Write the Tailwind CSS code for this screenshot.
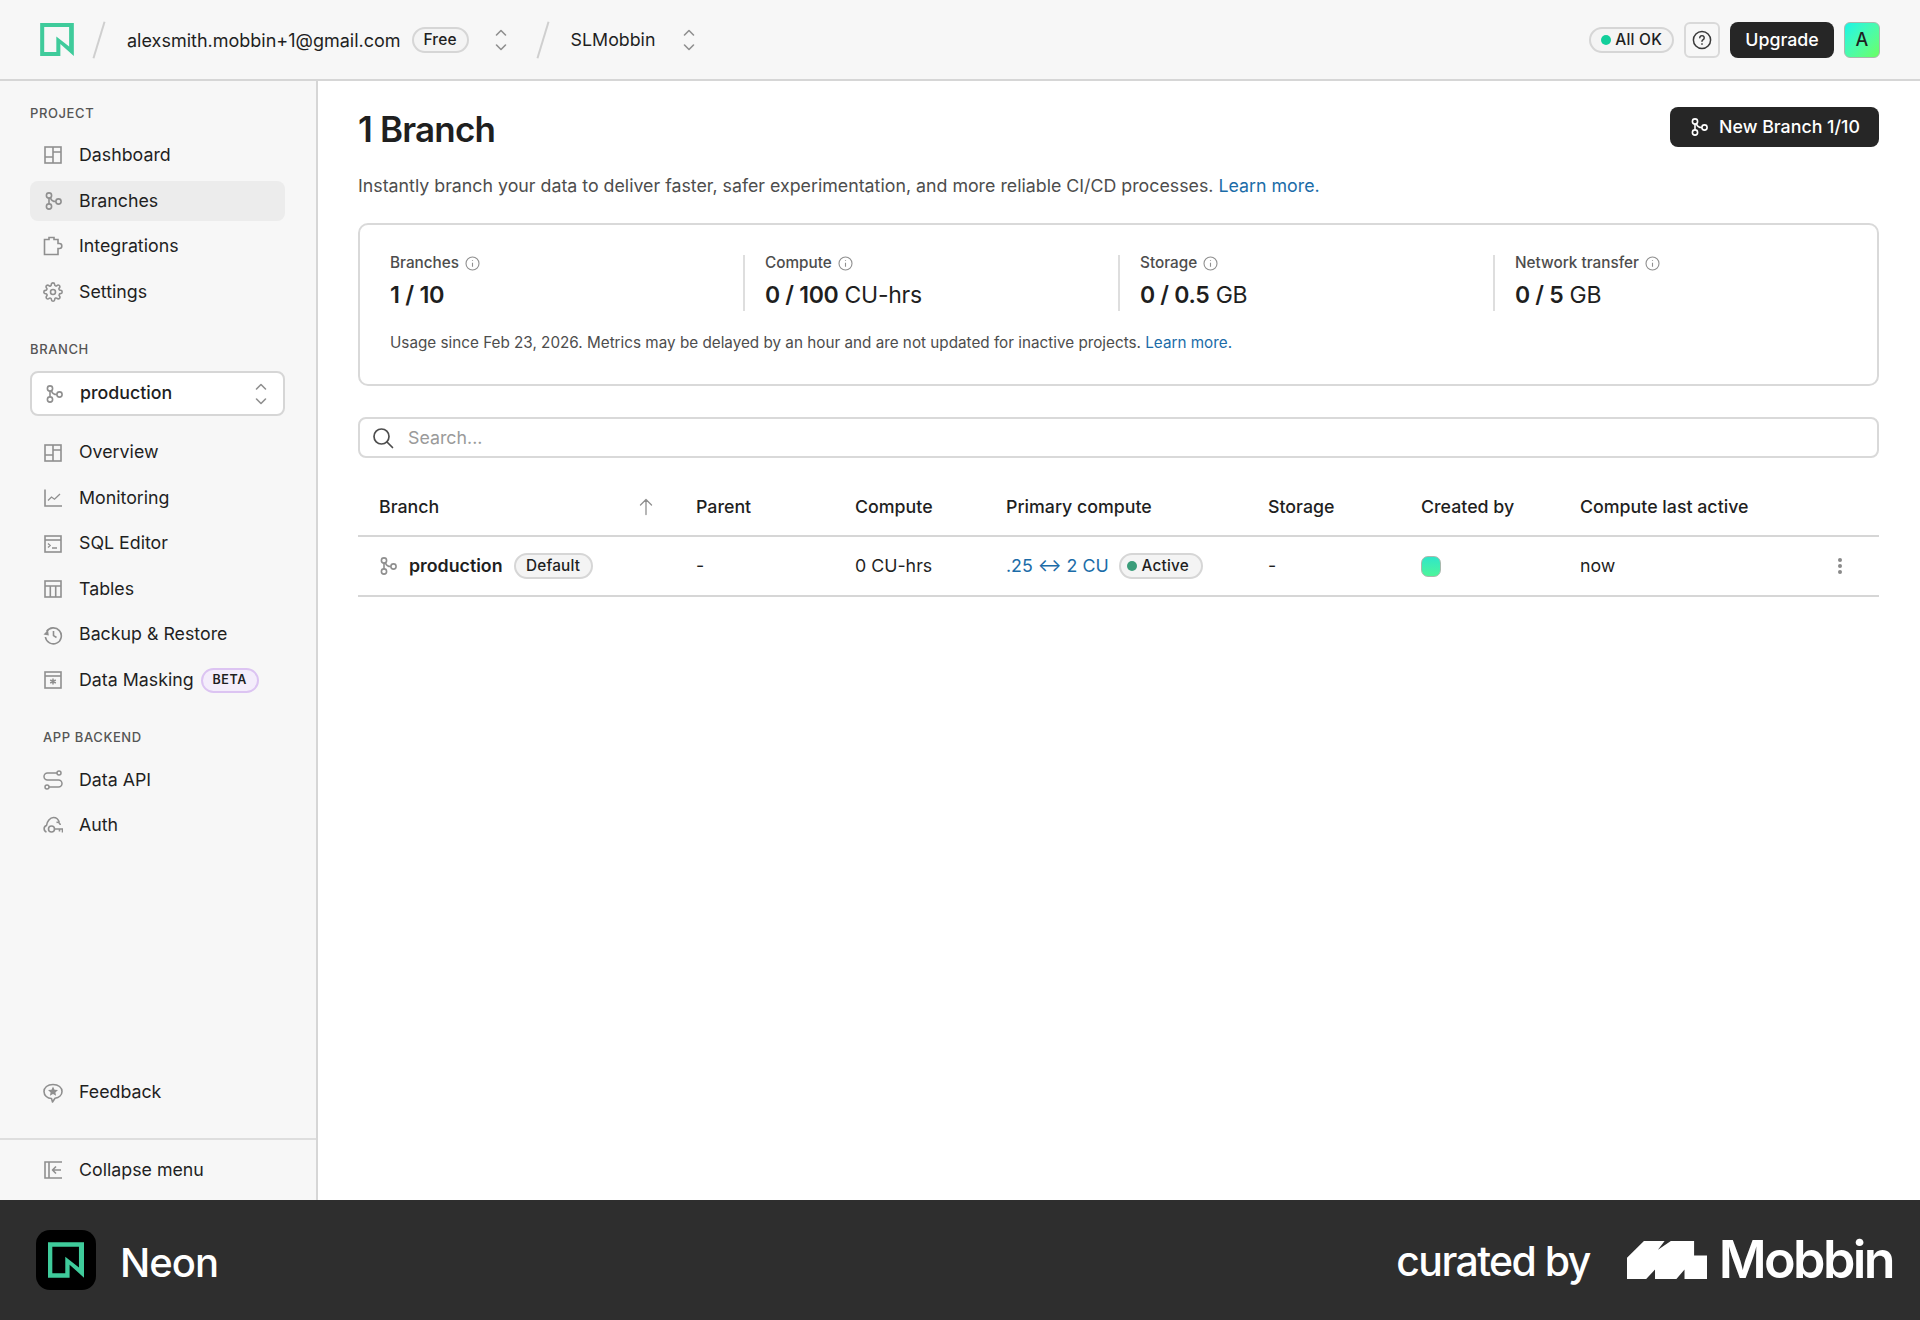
<!DOCTYPE html>
<html lang="en">
	<head>
		<meta charset="UTF-8" />
		<title>Branches</title>
		<script src="https://cdn.jsdelivr.net/npm/@tailwindcss/browser@4"></script>
	</head>
	<body class="font-['Inter',sans-serif] text-[#1f1f1f] bg-white">
		<div class="flex flex-col w-[1920px] h-[1320px] overflow-hidden">
			<!-- top bar -->
			<header class="flex items-center h-[81px] shrink-0 bg-[#f7f7f7] border-b-2 border-[#d6d6d6] pl-[40px] pr-[40px]">
				<svg class="w-[34px] h-[33px]" viewBox="0 0 100 98"><path fill="#3fcb9b" fill-rule="evenodd" d="M0 0H100V98L60 62V98H0ZM12 12V86H48V40L86 70V12Z" /></svg>
				<div class="ml-[24px] w-[2px] h-[38px] bg-[#cfcfcf] rotate-[17deg]"></div>
				<span class="ml-[27px] pt-[1px] text-[18px]">alexsmith.mobbin+1@gmail.com</span>
				<span class="ml-[11px] flex items-center justify-center w-[57px] h-[26px] rounded-full border-2 border-[#d6d6d6] bg-[#f4f4f4] text-[15.5px] font-medium tracking-[0.2px]">Free</span>
				<svg class="ml-[23px] w-[18px] h-[22px]" viewBox="0 0 18 22" fill="none" stroke="#8f8f8f" stroke-width="1.6" stroke-linecap="round" stroke-linejoin="round"><path d="M4.5 6 9 1.5 13.5 6M4.5 16 9 20.5 13.5 16" /></svg>
				<div class="ml-[32px] w-[2px] h-[38px] bg-[#cfcfcf] rotate-[17deg]"></div>
				<span class="ml-[27px] pt-[2px] text-[17.8px]">SLMobbin</span>
				<svg class="ml-[25px] w-[18px] h-[22px]" viewBox="0 0 18 22" fill="none" stroke="#8f8f8f" stroke-width="1.6" stroke-linecap="round" stroke-linejoin="round"><path d="M4.5 6 9 1.5 13.5 6M4.5 16 9 20.5 13.5 16" /></svg>
				<div class="ml-auto flex items-center gap-[10px]">
					<span class="flex items-center gap-[4px] h-[26px] px-[10px] rounded-full border-2 border-[#d6d6d6] bg-[#f4f4f4] text-[15.5px] font-medium tracking-[0.2px]"><span class="w-[10px] h-[10px] rounded-full bg-[#12cf9b]"></span>All OK</span>
					<span class="flex items-center justify-center w-[36px] h-[36px] rounded-md border-2 border-[#d9d9d9]">
						<svg class="w-[20px] h-[20px]" viewBox="0 0 20 20" fill="none" stroke="#3a3a3a" stroke-width="1.5"><circle cx="10" cy="10" r="8.6" /><path stroke-linecap="round" d="M7.8 7.8a2.2 2.2 0 1 1 3.4 1.9c-.8.5-1.2.9-1.2 1.6" /><circle cx="10" cy="14" r=".6" fill="#3a3a3a" stroke-width=".6" /></svg>
					</span>
					<span class="flex items-center justify-center w-[104px] h-[36px] pt-[1px] rounded-lg bg-[#262626] text-white text-[17.8px] font-medium">Upgrade</span>
					<span class="flex items-center justify-center w-[36px] h-[36px] rounded-md border border-[#a9b9ae] bg-gradient-to-br from-[#14f5e6] to-[#6bff5e] text-[18px] font-medium">A</span>
				</div>
			</header>

			<div class="flex flex-1 min-h-0">
				<!-- sidebar -->
				<aside class="flex flex-col w-[318px] shrink-0 bg-[#f7f7f7] border-r-2 border-[#d6d6d6] pt-[24px] text-[17.8px]">
					<div class="px-[30px]">
						<p class="h-[16px] leading-[16px] text-[13px] font-medium tracking-[0.6px] text-[#555]">PROJECT</p>
						<nav class="mt-[14px] flex flex-col gap-[4.75px] w-[255px]">
							<a class="flex items-center h-[40.75px] pl-[13px] gap-[16px] rounded-lg">
								<svg class="w-[20px] h-[20px]" viewBox="0 0 20 20" fill="none" stroke="#8f8f8f" stroke-width="1.6"><rect x="2" y="2" width="16" height="16" /><path d="M10 2v16M2 12h8M10 7h8" /></svg>
								Dashboard
							</a>
							<a class="flex items-center h-[40.75px] pl-[13px] gap-[16px] rounded-lg bg-[#ececec]">
								<svg class="w-[20px] h-[20px]" viewBox="0 0 20 20" fill="none" stroke="#8f8f8f" stroke-width="1.6"><circle cx="6" cy="4.5" r="2.6" /><circle cx="6" cy="15.5" r="2.6" /><circle cx="15.5" cy="10.5" r="2.6" /><path d="M6 7.1v5.8M7.5 6.7c.6 2.4 2.4 3.8 5.4 3.8" /></svg>
								Branches
							</a>
							<a class="flex items-center h-[40.75px] pl-[13px] gap-[16px] rounded-lg">
								<svg class="w-[20px] h-[20px]" viewBox="0 0 20 20" fill="none" stroke="#8f8f8f" stroke-width="1.6"><path d="M1.500 18.500V3.500H6V1.500H11V3.500H15V7.500H16.500C18 7.500 18.800 8.700 18.800 10S18 12.500 16.500 12.500H15V18.500Z" /></svg>
								Integrations
							</a>
							<a class="flex items-center h-[40.75px] pl-[13px] gap-[16px] rounded-lg">
								<svg class="w-[20px] h-[20px]" viewBox="0 0 24 24" fill="none" stroke="#8f8f8f" stroke-width="1.9" stroke-linecap="round" stroke-linejoin="round"><circle cx="12" cy="12" r="3" /><path d="M19.4 15a1.65 1.65 0 0 0 .33 1.82l.06.06a2 2 0 1 1-2.83 2.83l-.06-.06a1.65 1.65 0 0 0-2.82 1.17V21a2 2 0 1 1-4 0v-.09a1.65 1.65 0 0 0-2.82-1.2l-.06.06a2 2 0 1 1-2.83-2.83l.06-.06a1.65 1.65 0 0 0-1.17-2.82H3a2 2 0 1 1 0-4h.09a1.65 1.65 0 0 0 1.2-2.82l-.06-.06a2 2 0 1 1 2.83-2.83l.06.06a1.65 1.65 0 0 0 2.82-1.17V3a2 2 0 1 1 4 0v.09a1.65 1.65 0 0 0 2.82 1.2l.06-.06a2 2 0 1 1 2.83 2.83l-.06.06a1.65 1.65 0 0 0 1.17 2.82H21a2 2 0 1 1 0 4h-.09a1.65 1.65 0 0 0-1.51 1.06Z" /></svg>
								Settings
							</a>
						</nav>

						<p class="mt-[29px] h-[16px] leading-[16px] text-[13px] font-medium tracking-[0.6px] text-[#555]">BRANCH</p>
						<div class="mt-[14px] flex items-center h-[45px] w-[255px] pl-[12px] pr-[13px] gap-[16px] rounded-lg border-2 border-[#d6d6d6] bg-white font-medium">
							<svg class="w-[20px] h-[20px]" viewBox="0 0 20 20" fill="none" stroke="#8f8f8f" stroke-width="1.6"><circle cx="6" cy="4.5" r="2.6" /><circle cx="6" cy="15.5" r="2.6" /><circle cx="15.5" cy="10.5" r="2.6" /><path d="M6 7.1v5.8M7.5 6.7c.6 2.4 2.4 3.8 5.4 3.8" /></svg>
							production
							<svg class="ml-auto w-[18px] h-[22px]" viewBox="0 0 18 22" fill="none" stroke="#8f8f8f" stroke-width="1.6" stroke-linecap="round" stroke-linejoin="round"><path d="M4.5 6 9 1.5 13.5 6M4.5 16 9 20.5 13.5 16" /></svg>
						</div>

						<nav class="mt-[16px] flex flex-col gap-[4.75px] w-[255px]">
							<a class="flex items-center h-[40.75px] pl-[13px] gap-[16px]">
								<svg class="w-[20px] h-[20px]" viewBox="0 0 20 20" fill="none" stroke="#8f8f8f" stroke-width="1.6"><rect x="2" y="2" width="16" height="16" /><path d="M10 2v16M2 12h8M10 7h8" /></svg>
								Overview
							</a>
							<a class="flex items-center h-[40.75px] pl-[13px] gap-[16px]">
								<svg class="w-[20px] h-[20px]" viewBox="0 0 20 20" fill="none" stroke="#8f8f8f" stroke-width="1.6"><path d="M2 1.5V18h17" /><path stroke-width="1.3" d="M5 12.5 8.5 9l3 2.2L17 6" /></svg>
								Monitoring
							</a>
							<a class="flex items-center h-[40.75px] pl-[13px] gap-[16px]">
								<svg class="w-[20px] h-[20px]" viewBox="0 0 20 20" fill="none" stroke="#8f8f8f" stroke-width="1.6"><rect x="2" y="2" width="16" height="16" /><path d="M2 6h16" /><path stroke-width="1.3" d="m5 9.5 2.2 2L5 13.5M9 14h5" /></svg>
								SQL Editor
							</a>
							<a class="flex items-center h-[40.75px] pl-[13px] gap-[16px]">
								<svg class="w-[20px] h-[20px]" viewBox="0 0 20 20" fill="none" stroke="#8f8f8f" stroke-width="1.6"><rect x="2" y="2" width="16" height="16" /><path d="M2 7h16M7.3 7v11M12.7 7v11" /></svg>
								Tables
							</a>
							<a class="flex items-center h-[40.75px] pl-[13px] gap-[16px]">
								<svg class="w-[20px] h-[20px]" viewBox="0 0 20 20" fill="none" stroke="#8f8f8f" stroke-width="1.6" stroke-linejoin="round"><path d="M3.6 6.5A8 8 0 1 1 2.4 12" /><path fill="#8f8f8f" stroke="none" d="M.5 9.5 5 5l.8 5.5Z" /><path d="M10.5 6v4.6l3 1.9" /></svg>
								Backup &amp; Restore
							</a>
							<a class="flex items-center h-[40.75px] pl-[13px] gap-[7px] whitespace-nowrap">
								<svg class="w-[20px] h-[20px] mr-[9px]" viewBox="0 0 20 20" fill="none" stroke="#8f8f8f" stroke-width="1.6"><rect x="2" y="2" width="16" height="16" /><path d="M2 6h16" /><path stroke-width="1.5" d="M10 8.5v6M7.2 10l5.6 3M12.8 10l-5.6 3" /></svg>
								Data Masking
								<span class="flex items-center justify-center w-[58px] h-[25px] rounded-full border-2 border-[#dcc4f2] bg-[#f4edfb] text-[12.5px] font-semibold tracking-[0.6px]">BETA</span>
							</a>
						</nav>

						<p class="ml-[13px] mt-[28px] h-[16px] leading-[16px] text-[13px] font-medium tracking-[0.6px] text-[#555]">APP BACKEND</p>
						<nav class="mt-[15px] flex flex-col gap-[4.75px] w-[255px]">
							<a class="flex items-center h-[40.75px] pl-[13px] gap-[16px]">
								<svg class="w-[20px] h-[20px]" viewBox="0 0 20 20" fill="none" stroke="#8f8f8f" stroke-width="1.5"><path d="M14 3H4.5a3 3 0 0 0 0 7h11a3 3 0 0 1 0 7H6" /><circle cx="16" cy="3" r="2" /><circle cx="4" cy="17" r="2" /></svg>
								Data API
							</a>
							<a class="flex items-center h-[40.75px] pl-[13px] gap-[16px]">
								<svg class="w-[20px] h-[20px]" viewBox="0 0 20 20" fill="none" stroke="#8f8f8f" stroke-width="1.6"><path d="M3.500 17C.500 16 .200 11.500 3.500 10.500 4 6.500 7 2.500 10.500 2.500c3 0 5 2 5.800 5" /><path d="M13.500 7.500c1-.5 3.500 0 3.800 2.500" /><circle cx="8.500" cy="14" r="3" /><path d="M11.500 14H19.500V17.500M16.500 14v2.500" /></svg>
								Auth
							</a>
						</nav>
					</div>

					<div class="mt-auto px-[30px] mb-[25px]">
						<a class="flex items-center h-[41px] pl-[13px] gap-[16px]">
							<svg class="w-[20px] h-[20px]" viewBox="0 0 20 20" fill="none" stroke="#8f8f8f" stroke-width="1.6" stroke-linejoin="round"><path d="M10 1.500C4.500 1.500 1 4.500 1 8.500c0 4 3.500 7 7.500 7L9.500 19 12 15.300c4-.6 7-3.300 7-6.800 0-4-3.500-7-9-7Z" /><path fill="#8f8f8f" stroke="none" d="m10 3.500 1.500 3.200 3.500.4-2.600 2.300.7 3.400L10 11l-3.100 1.800.7-3.400L5 7.100l3.500-.4Z" /></svg>
							Feedback
						</a>
					</div>
					<div class="border-t-2 border-[#dedede] px-[30px] py-[10px]">
						<a class="flex items-center h-[40px] pl-[13px] gap-[16px]">
							<svg class="w-[20px] h-[20px]" viewBox="0 0 20 20" fill="none" stroke="#8f8f8f" stroke-width="1.6"><path d="M19 2H2v16h17M6 2v16" /><path stroke-linejoin="round" d="M18 10h-8M13 6.500 9.500 10l3.500 3.500" /></svg>
							Collapse menu
						</a>
					</div>
				</aside>

				<!-- main -->
				<main class="flex-1 pl-[40px] pr-[41px] pt-[26px] min-w-0">
					<div class="flex items-start justify-between">
						<h1 class="h-[44px] leading-[44px] text-[35px] font-semibold tracking-[-0.8px]">1 Branch</h1>
						<button class="flex items-center justify-center gap-[10px] w-[209px] h-[40px] rounded-lg bg-[#262626] text-white text-[17.8px] font-medium">
							<svg class="w-[20px] h-[20px]" viewBox="0 0 20 20" fill="none" stroke="#ffffff" stroke-width="1.6"><circle cx="6" cy="4.500" r="2.600" /><circle cx="6" cy="15.500" r="2.600" /><circle cx="15.500" cy="10.500" r="2.600" /><path d="M6 7.100v5.800M7.500 6.700c.6 2.400 2.400 3.800 5.400 3.800" /></svg>
							New Branch 1/10
						</button>
					</div>
					<p class="mt-[21px] h-[28px] leading-[28px] text-[17.8px] text-[#4d4d4d]">Instantly branch your data to deliver faster, safer experimentation, and more reliable CI/CD processes. <a class="text-[#1b6ca8]">Learn more.</a></p>

					<section class="mt-[23px] h-[163px] rounded-[10px] border-2 border-[#d9d9d9] pl-[30px] pt-[30px]">
						<div class="flex h-[56px]">
							<div class="w-[353px]">
								<p class="flex items-center gap-[6px] h-[16px] text-[15.3px] font-medium text-[#4d4d4d]">Branches
									<svg class="w-[15px] h-[15px]" viewBox="0 0 15 15" fill="none" stroke="#8f8f8f" stroke-width="1.100"><circle cx="7.500" cy="7.500" r="6.500" /><path d="M7.500 6.800v4M7.500 4.200v.8" /></svg>
								</p>
								<p class="mt-[9px] h-[30px] leading-[30px] text-[23.5px] font-semibold tracking-[-0.3px]">1 / 10</p>
							</div>
							<div class="w-[375px] border-l-2 border-[#dedede] pl-[20px]">
								<p class="flex items-center gap-[6px] h-[16px] text-[15.3px] font-medium text-[#4d4d4d]">Compute
									<svg class="w-[15px] h-[15px]" viewBox="0 0 15 15" fill="none" stroke="#8f8f8f" stroke-width="1.100"><circle cx="7.500" cy="7.500" r="6.500" /><path d="M7.500 6.800v4M7.500 4.200v.8" /></svg>
								</p>
								<p class="mt-[9px] h-[30px] leading-[30px] text-[23px] tracking-[-0.3px]"><span class="font-semibold">0 / 100</span> CU-hrs</p>
							</div>
							<div class="w-[375px] border-l-2 border-[#dedede] pl-[20px]">
								<p class="flex items-center gap-[6px] h-[16px] text-[15.3px] font-medium text-[#4d4d4d]">Storage
									<svg class="w-[15px] h-[15px]" viewBox="0 0 15 15" fill="none" stroke="#8f8f8f" stroke-width="1.100"><circle cx="7.500" cy="7.500" r="6.500" /><path d="M7.500 6.800v4M7.500 4.200v.8" /></svg>
								</p>
								<p class="mt-[9px] h-[30px] leading-[30px] text-[23px] tracking-[-0.3px]"><span class="font-semibold">0 / 0.5</span> GB</p>
							</div>
							<div class="w-[375px] border-l-2 border-[#dedede] pl-[20px]">
								<p class="flex items-center gap-[6px] h-[16px] text-[15.3px] font-medium text-[#4d4d4d]">Network transfer
									<svg class="w-[15px] h-[15px]" viewBox="0 0 15 15" fill="none" stroke="#8f8f8f" stroke-width="1.100"><circle cx="7.500" cy="7.500" r="6.500" /><path d="M7.500 6.800v4M7.500 4.200v.8" /></svg>
								</p>
								<p class="mt-[9px] h-[30px] leading-[30px] text-[23px] tracking-[-0.3px]"><span class="font-semibold">0 / 5</span> GB</p>
							</div>
						</div>
						<p class="mt-[21px] h-[22px] leading-[22px] text-[15.25px] text-[#4d4d4d]">Usage since Feb 23, 2026. Metrics may be delayed by an hour and are not updated for inactive projects. <a class="text-[#1b6ca8]">Learn more.</a></p>
					</section>

					<div class="mt-[31px] flex items-center h-[41px] rounded-lg border-2 border-[#d9d9d9] pl-[12px] gap-[14px]">
						<svg class="w-[22px] h-[22px]" viewBox="0 0 22 22" fill="none" stroke="#4d4d4d" stroke-width="1.700" stroke-linecap="round"><circle cx="9.500" cy="9.500" r="7.500" /><path d="m15 15 5.500 5.500" /></svg>
						<span class="pt-[1px] text-[17.8px] text-[#9a9a9a]">Search...</span>
					</div>

					<!-- table -->
					<div class="mt-[20px] grid grid-cols-[317px_159px_151px_262px_153px_159px_1fr] items-center h-[59px] pt-[1px] pl-[21px] border-b-2 border-[#d6d6d6] text-[17.8px] font-medium">
						<div class="flex items-center justify-between pr-[42px]">Branch
							<svg class="w-[16px] h-[18px]" viewBox="0 0 16 18" fill="none" stroke="#8f8f8f" stroke-width="1.300" stroke-linecap="round" stroke-linejoin="round"><path d="M8 16.500V1.500M2.500 7 8 1.500 13.500 7" /></svg>
						</div>
						<div>Parent</div>
						<div>Compute</div>
						<div>Primary compute</div>
						<div>Storage</div>
						<div>Created by</div>
						<div>Compute last active</div>
					</div>
					<div class="grid grid-cols-[317px_159px_151px_262px_153px_159px_1fr] items-center h-[60px] pl-[21px] border-b-2 border-[#d6d6d6] text-[17.8px]">
						<div class="flex items-center">
							<svg class="-ml-[1px] w-[20px] h-[20px]" viewBox="0 0 20 20" fill="none" stroke="#8f8f8f" stroke-width="1.600"><circle cx="6" cy="4.500" r="2.600" /><circle cx="6" cy="15.500" r="2.600" /><circle cx="15.500" cy="10.500" r="2.600" /><path d="M6 7.100v5.800M7.500 6.700c.6 2.400 2.400 3.800 5.400 3.800" /></svg>
							<span class="ml-[11px] font-semibold">production</span>
							<span class="ml-[11px] flex items-center justify-center w-[79px] h-[26px] rounded-full border-2 border-[#d6d6d6] bg-[#f4f4f4] text-[15.3px] font-medium tracking-[0.2px]">Default</span>
						</div>
						<div>-</div>
						<div>0 CU-hrs</div>
						<div class="flex items-center">
							<span class="text-[#1b6ca8]">.25 ↔ 2 CU</span>
							<span class="ml-[10px] flex items-center justify-center gap-[5px] w-[84px] h-[26px] pr-[6px] rounded-full border-2 border-[#d6d6d6] bg-[#f4f4f4] text-[15.3px] font-medium tracking-[0.2px]"><span class="w-[10px] h-[10px] rounded-full bg-[#3a9d7a]"></span>Active</span>
						</div>
						<div>-</div>
						<div><div class="w-[20px] h-[21px] rounded-[7px] border border-[#a9b9ae] bg-gradient-to-b from-[#2fe6c8] to-[#4df59a]"></div></div>
						<div class="flex items-center justify-between pr-[36px]">now
							<svg class="w-[6px] h-[18px]" viewBox="0 0 6 18" fill="#8a8a8a"><circle cx="3" cy="3" r="2" /><circle cx="3" cy="9" r="2" /><circle cx="3" cy="15" r="2" /></svg>
						</div>
					</div>
				</main>
			</div>

			<!-- footer -->
			<footer class="flex items-center justify-between h-[120px] shrink-0 bg-[#2e2e2e] pl-[36px] pr-[27px] text-white">
				<div class="flex items-center">
					<span class="flex items-center justify-center w-[60px] h-[60px] rounded-[14px] bg-black">
						<svg class="w-[36px] h-[36px]" viewBox="0 0 100 98"><path fill="#3fcb9b" fill-rule="evenodd" d="M0 0H100V98L60 62V98H0ZM12 12V86H48V40L86 70V12Z" /></svg>
					</span>
					<span class="ml-[24px] pt-[5px] text-[40px] font-medium tracking-[-1px]">Neon</span>
				</div>
				<div class="flex items-center">
					<span class="pt-[3px] text-[41px] font-medium tracking-[-1.6px]">curated by</span>
					<svg class="ml-[37px] w-[80px] h-[38px]" viewBox="0 0 217 113" preserveAspectRatio="none"><path fill="#ffffff" d="M0 113V50L46 0H102L84 26 119 0H182V43H217V113H156V85L134 113H76V85L52 113Z" /></svg>
					<span class="ml-[12px] text-[52px] font-semibold tracking-[-2.6px]">Mobbin</span>
				</div>
			</footer>
		</div>
	</body>
</html>
